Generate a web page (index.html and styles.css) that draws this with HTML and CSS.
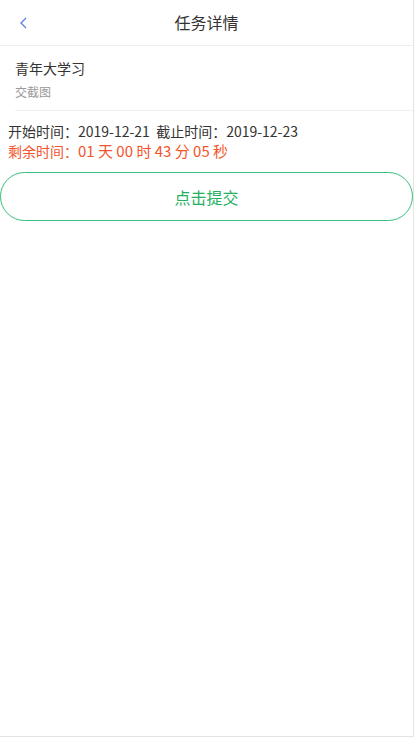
FILE: index.html
```html
<!DOCTYPE html>
<html lang="zh-CN">
<head>
<meta charset="utf-8">
<title>任务详情</title>
<link rel="stylesheet" href="styles.css">
</head>
<body>
<div class="page">
  <header class="nav">
    <span class="back">
      <svg width="7" height="12" viewBox="0 0 7 12"><path d="M6 1 L1 6 L6 11" fill="none" stroke="#5a7de6" stroke-width="1.3"/></svg>
    </span>
    <h1 class="nav-title">任务详情</h1>
    <span class="nav-side"></span>
  </header>
  <section class="task">
    <div class="task-inner">
      <div class="task-name">青年大学习</div>
      <div class="task-desc">交截图</div>
    </div>
  </section>
  <section class="times">
    <div class="time-line">开始时间：2019-12-21&nbsp;&nbsp;截止时间：2019-12-23</div>
    <div class="remain">剩余时间：<span class="count">01 天 00 时 43 分 05 秒</span></div>
  </section>
  <button class="submit">点击提交</button>
</div>
</body>
</html>
```
FILE: styles.css
```css
html, body {
  margin: 0;
  padding: 0;
  background: #fff;
}
body {
  font-family: "Noto Sans CJK SC", "Noto Sans", sans-serif;
  color: #333;
}
.page {
  width: 413px;
  height: 736px;
  border-right: 1px solid #e4e4e4;
  border-bottom: 1px solid #e4e4e4;
  background: #fff;
}
.nav {
  height: 45px;
  border-bottom: 1px solid #efefef;
  display: grid;
  grid-template-columns: 44px 1fr 44px;
  align-items: center;
}
.back {
  display: flex;
  align-items: center;
  padding-left: 20px;
  height: 45px;
}
.nav-title {
  margin: 0;
  font-size: 16px;
  font-weight: normal;
  text-align: center;
  color: #333;
  line-height: 45px;
}
.task {
  padding-left: 15px;
}
.task-inner {
  padding: 11px 0 7px;
  border-bottom: 1px solid #f0f0f0;
}
.task-name {
  font-size: 14px;
  line-height: 22px;
  color: #333;
}
.task-desc {
  margin-top: 2px;
  font-size: 12px;
  line-height: 22px;
  color: #999;
}
.times {
  padding: 10px 8px 0;
}
.time-line {
  font-size: 14px;
  line-height: 20px;
  color: #333;
}
.remain {
  font-size: 14px;
  line-height: 20px;
  color: #f2552c;
}
.count {
  font-size: 15px;
}
.submit {
  display: block;
  margin-top: 11px;
  width: 413px;
  height: 49px;
  border: 1px solid #36bf7a;
  border-radius: 25px;
  background: #fff;
  color: #25b05f;
  font-family: inherit;
  font-size: 16px;
  padding: 0;
}
```
